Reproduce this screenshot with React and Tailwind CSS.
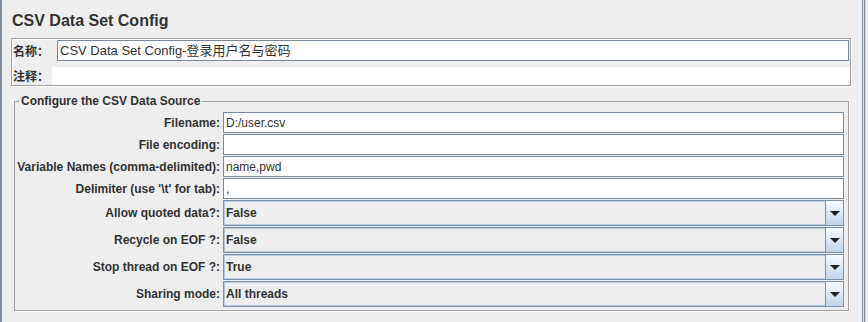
import React from 'react';

const textRows = [
  { label: 'Filename:', value: 'D:/user.csv' },
  { label: 'File encoding:', value: '' },
  { label: 'Variable Names (comma-delimited):', value: 'name,pwd' },
  { label: "Delimiter (use '\\t' for tab):", value: ',' },
];

const comboRows = [
  { label: 'Allow quoted data?:', value: 'False' },
  { label: 'Recycle on EOF ?:', value: 'False' },
  { label: 'Stop thread on EOF ?:', value: 'True' },
  { label: 'Sharing mode:', value: 'All threads' },
];

function ComboBox({ value }) {
  return (
    <div className="flex-1 h-full flex border border-[#7f92a6] shadow-[inset_0_0_0_1px_#b7cbe0] bg-[#eeeeee]">
      <div className="flex-1 flex items-center pl-[2px] font-bold">{value}</div>
      <div className="w-[18px] border-l border-[#7f92a6] bg-gradient-to-b from-[#f7fafd] to-[#c3d5e7] flex items-center justify-center">
        <svg width="10" height="5" viewBox="0 0 10 5">
          <polygon points="0,0 10,0 5,5" fill="#222" />
        </svg>
      </div>
    </div>
  );
}

export default function App() {
  return (
    <div className="w-[868px] h-[322px] bg-[#eeeeee] flex overflow-hidden text-[#333333] font-['Liberation_Sans','Noto_Sans_CJK_SC',sans-serif] text-[12px]">
      {/* left edge */}
      <div className="w-[2px] bg-[#7f8fa0]" />

      <div className="w-[860px] pl-[9px] pr-[11px] flex flex-col">
        <div className="h-[38px] pt-[4px] pl-[1px] flex items-center text-[16px] font-bold">
          CSV Data Set Config
        </div>

        {/* name / comment */}
        <div className="h-[48px] border border-[#a3a3a3] shadow-[1px_1px_0_#ffffff,inset_1px_1px_0_#ffffff]">
          <div className="mt-[1px] h-[21px] flex">
            <div className="w-[45px] pl-[1px] flex items-center font-bold font-['Noto_Sans_CJK_SC',sans-serif]">名称：</div>
            <div className="flex-1 mr-[1px] border border-[#7a8a99] bg-white pl-[2px] flex items-center text-[13px]">
              CSV Data Set Config-登录用户名与密码
            </div>
          </div>
          <div className="mt-[6px] h-[18px] flex">
            <div className="w-[40px] pl-[1px] flex items-center font-bold font-['Noto_Sans_CJK_SC',sans-serif]">注释：</div>
            <div className="flex-1 bg-white" />
          </div>
        </div>

        <fieldset className="mt-[8px] ml-[3px] mr-[2px] border border-[#a3a3a3] shadow-[1px_1px_0_#ffffff] pb-[3px] pr-[4px]">
          <legend className="ml-[4px] px-[2px] font-bold leading-[14px]">Configure the CSV Data Source</legend>
          <div className="mt-[4px] flex flex-col">
            {textRows.map((row, i) => (
              <div key={row.label} className={`h-[21px] flex ${i > 0 ? 'mt-[1px]' : ''}`}>
                <div className="w-[205px] flex items-center justify-end font-bold whitespace-nowrap">{row.label}</div>
                <div className="ml-[3px] flex-1 border border-[#7a8a99] bg-white pl-[2px] flex items-center">
                  {row.value}
                </div>
              </div>
            ))}
            {comboRows.map((row) => (
              <div key={row.label} className="mt-[1px] h-[26px] flex">
                <div className="w-[205px] flex items-center justify-end font-bold whitespace-nowrap">{row.label}</div>
                <div className="ml-[3px] flex-1 h-full flex">
                  <ComboBox value={row.value} />
                </div>
              </div>
            ))}
          </div>
        </fieldset>
      </div>

      {/* right edge */}
      <div className="w-px bg-[#7d8b98]" />
      <div className="w-px bg-[#e6e6e6]" />
      <div className="w-px bg-[#7d8b98]" />
      <div className="w-px bg-[#c7d9ec]" />
      <div className="flex-1 bg-[#eeeeee]" />
    </div>
  );
}
